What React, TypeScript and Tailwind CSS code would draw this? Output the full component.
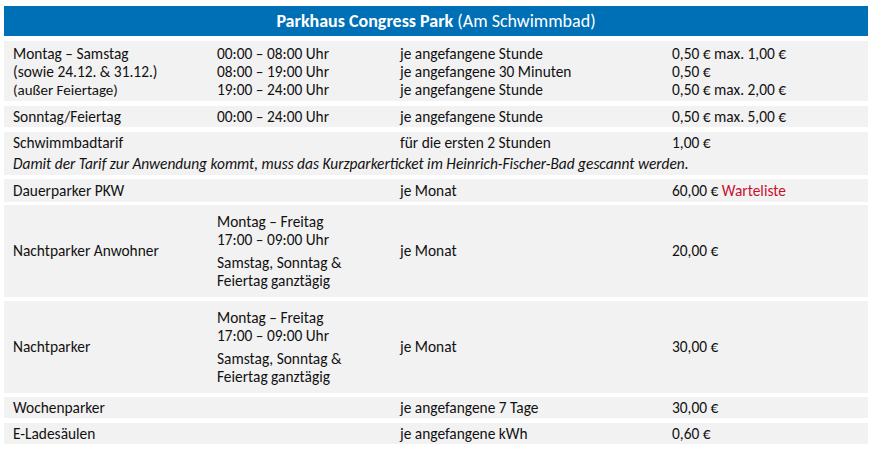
import React from "react";

const font = { fontFamily: "Carlito, Lato, 'Open Sans', sans-serif" };

function Row({ className = "", children }: { className?: string; children: React.ReactNode }) {
  return (
    <div className={"grid grid-cols-[213px_183px_272px_1fr] bg-[#f2f2f2] " + className}>{children}</div>
  );
}

const Night = ({ label }: { label: string }) => (
  <Row className="h-[92px] items-center">
    <div className="pl-[9px]">{label}</div>
    <div className="flex flex-col gap-[5px]">
      <div>
        <div>Montag – Freitag</div>
        <div>17:00 – 09:00 Uhr</div>
      </div>
      <div>
        <div>Samstag, Sonntag &amp;</div>
        <div>Feiertag ganztägig</div>
      </div>
    </div>
    <div>je Monat</div>
    <div>{label === "Nachtparker" ? "30,00 €" : "20,00 €"}</div>
  </Row>
);

export default function App() {
  return (
    <div
      className="w-[873px] h-[451px] bg-white pt-[6px] pl-[4px] pr-[5px] text-[15.4px] leading-[18px] text-[#111111]"
      style={font}
    >
      <div className="h-[30px] bg-[#0070b6] flex items-center justify-center text-white text-[18px]">
        <span className="font-bold">Parkhaus Congress Park</span>
        <span>&nbsp;(Am Schwimmbad)</span>
      </div>

      <Row className="mt-[5px] h-[60px] items-center pt-[2px]">
        <div className="pl-[9px]">
          <div>Montag – Samstag</div>
          <div>(sowie 24.12. &amp; 31.12.)</div>
          <div className="text-[15px]">(außer Feiertage)</div>
        </div>
        <div>
          <div>00:00 – 08:00 Uhr</div>
          <div>08:00 – 19:00 Uhr</div>
          <div>19:00 – 24:00 Uhr</div>
        </div>
        <div>
          <div>je angefangene Stunde</div>
          <div>je angefangene 30 Minuten</div>
          <div>je angefangene Stunde</div>
        </div>
        <div>
          <div>0,50 € max. 1,00 €</div>
          <div>0,50 €</div>
          <div>0,50 € max. 2,00 €</div>
        </div>
      </Row>

      <Row className="mt-[5px] h-[21px] items-center">
        <div className="pl-[9px]">Sonntag/Feiertag</div>
        <div>00:00 – 24:00 Uhr</div>
        <div>je angefangene Stunde</div>
        <div>0,50 € max. 5,00 €</div>
      </Row>

      <div className="mt-[5px] h-[43px] bg-[#f2f2f2] flex flex-col">
        <div className="grid grid-cols-[213px_183px_272px_1fr] h-[21px] items-center">
          <div className="pl-[9px]">Schwimmbadtarif</div>
          <div></div>
          <div>für die ersten 2 Stunden</div>
          <div>1,00 €</div>
        </div>
        <div className="h-[22px] flex items-center pl-[9px] italic">
          Damit der Tarif zur Anwendung kommt, muss das Kurzparkerticket im Heinrich-Fischer-Bad gescannt werden.
        </div>
      </div>

      <Row className="mt-[4px] h-[23px] items-center pt-[1px]">
        <div className="pl-[9px]">Dauerparker PKW</div>
        <div></div>
        <div>je Monat</div>
        <div>
          60,00 € <span className="text-[#c8102e]">Warteliste</span>
        </div>
      </Row>

      <div className="mt-[3px]">
        <Night label="Nachtparker Anwohner" />
      </div>
      <div className="mt-[4px]">
        <Night label="Nachtparker" />
      </div>

      <Row className="mt-[4px] h-[21px] items-center">
        <div className="pl-[9px]">Wochenparker</div>
        <div></div>
        <div>je angefangene 7 Tage</div>
        <div>30,00 €</div>
      </Row>

      <Row className="mt-[5px] h-[21px] items-center">
        <div className="pl-[9px]">E-Ladesäulen</div>
        <div></div>
        <div>je angefangene kWh</div>
        <div>0,60 €</div>
      </Row>
    </div>
  );
}
